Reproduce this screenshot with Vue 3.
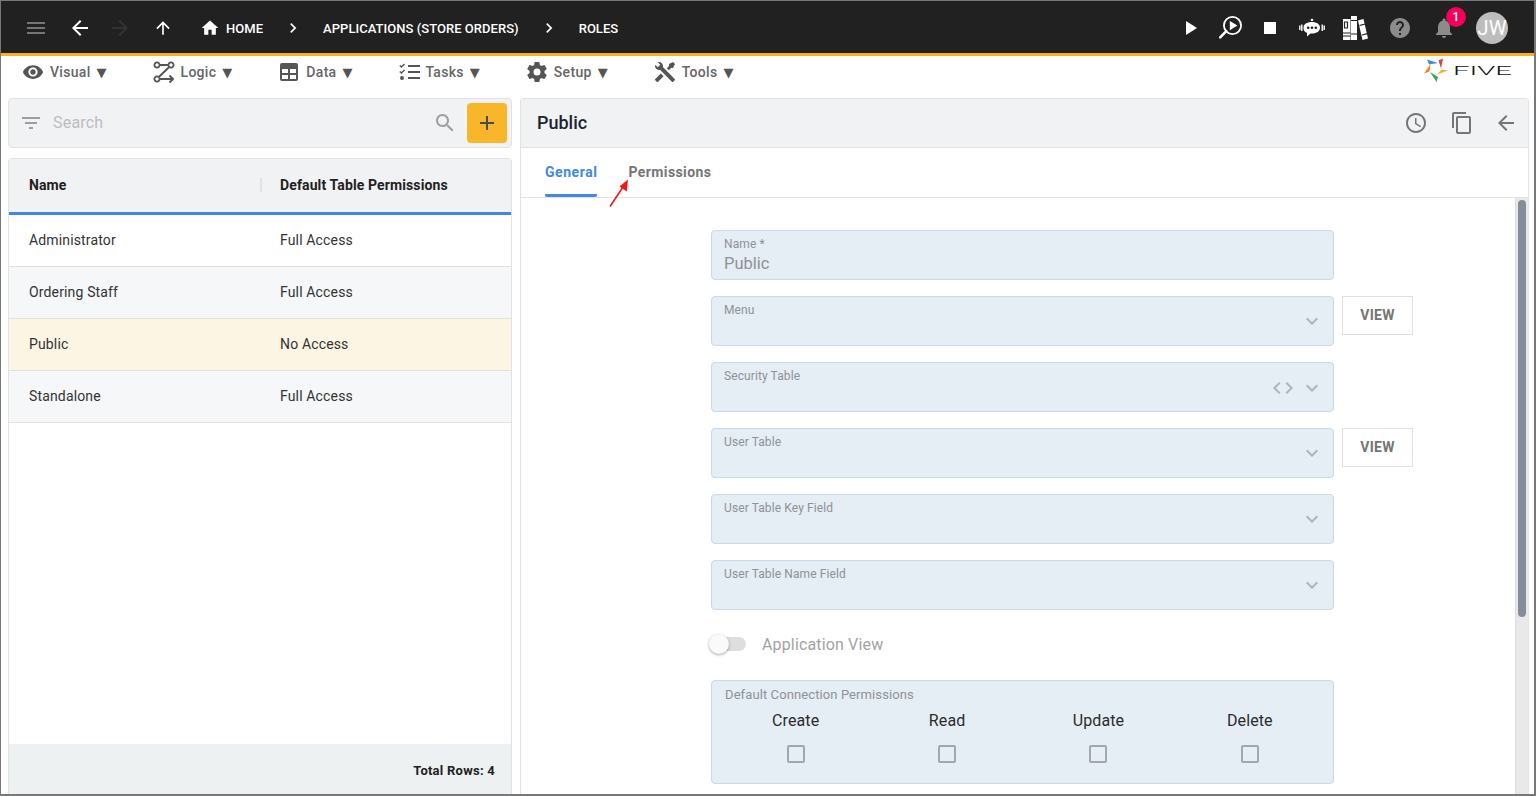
<script setup>
const icons = {
  menu: 'M3 18h18v-2H3v2zm0-5h18v-2H3v2zm0-7v2h18V6H3z',
  back: 'M20 11H7.83l5.59-5.59L12 4l-8 8 8 8 1.41-1.41L7.83 13H20v-2z',
  forward: 'M12 4l-1.41 1.41L16.17 11H4v2h12.17l-5.58 5.59L12 20l8-8z',
  up: 'M4 12l1.41 1.41L11 7.83V20h2V7.83l5.58 5.59L20 12l-8-8-8 8z',
  home: 'M10 20v-6h4v6h5v-8h3L12 3 2 12h3v8z',
  chevron: 'M10 6L8.59 7.41 13.17 12l-4.58 4.59L10 18l6-6z',
  play: 'M8 5v14l11-7z',
  stop: 'M6 6h12v12H6z',
  help: 'M12 2C6.48 2 2 6.48 2 12s4.48 10 10 10 10-4.48 10-10S17.52 2 12 2zm1 17h-2v-2h2v2zm2.07-7.75l-.9.92C13.45 12.9 13 13.5 13 15h-2v-.5c0-1.1.45-2.1 1.17-2.83l1.24-1.26c.37-.36.59-.86.59-1.41 0-1.1-.9-2-2-2s-2 .9-2 2H8c0-2.21 1.79-4 4-4s4 1.79 4 4c0 .88-.36 1.68-.93 2.25z',
  bell: 'M12 22c1.1 0 2-.9 2-2h-4c0 1.1.89 2 2 2zm6-6v-5c0-3.07-1.64-5.64-4.5-6.32V4c0-.83-.67-1.5-1.5-1.5s-1.5.67-1.5 1.5v.68C7.63 5.36 6 7.92 6 11v5l-2 2v1h16v-1l-2-2z',
  visual: 'M12 4.5C7 4.5 2.73 7.61 1 12c1.73 4.39 6 7.5 11 7.5s9.27-3.11 11-7.5c-1.73-4.39-6-7.5-11-7.5zM12 17c-2.76 0-5-2.24-5-5s2.24-5 5-5 5 2.24 5 5-2.24 5-5 5zm0-8c-1.66 0-3 1.34-3 3s1.34 3 3 3 3-1.34 3-3-1.34-3-3-3z',
  logic: 'M7.600 5h8.800M17.200 7 6.800 17M7.600 19H21M17.500 15.500 21 19l-3.500 3.500M2.400 5a2.600 2.600 0 1 0 5.200 0 2.600 2.600 0 1 0-5.200 0zM16.400 5a2.600 2.600 0 1 0 5.200 0 2.600 2.600 0 1 0-5.200 0zM2.400 19a2.600 2.600 0 1 0 5.200 0 2.600 2.600 0 1 0-5.200 0z',
  data: 'M5 3h14a2 2 0 0 1 2 2v14a2 2 0 0 1-2 2H5a2 2 0 0 1-2-2V5a2 2 0 0 1 2-2zm0 6v4h6V9H5zm8 0v4h6V9h-6zm-8 6v4h6v-4H5zm8 0v4h6v-4h-6z',
  tasks: 'M10 5h12v2H10V5zm0 6h12v2H10v-2zm0 6h12v2H10v-2zM3.400 8 1.300 5.900l1-1 1.100 1.100L6 3.400l1 1L3.400 8zm0 6-2.100-2.100 1-1 1.100 1.100L6 9.400l1 1L3.400 14zM4 16a2 2 0 1 1 0 4 2 2 0 0 1 0-4z',
  setup: 'M12 15.5A3.5 3.5 0 0 1 8.5 12 3.5 3.5 0 0 1 12 8.5a3.5 3.5 0 0 1 3.5 3.5 3.5 3.5 0 0 1-3.5 3.5m7.43-2.53c.04-.32.07-.64.07-.97 0-.33-.03-.66-.07-1l2.11-1.63c.19-.15.24-.42.12-.64l-2-3.46c-.12-.22-.39-.31-.61-.22l-2.49 1c-.52-.39-1.06-.73-1.69-.98l-.37-2.65A.506.506 0 0 0 14 2h-4c-.25 0-.46.18-.5.42l-.37 2.65c-.63.25-1.17.59-1.69.98l-2.49-1c-.22-.09-.49 0-.61.22l-2 3.46c-.13.22-.07.49.12.64L4.57 11c-.04.34-.07.67-.07 1 0 .33.03.65.07.97l-2.11 1.66c-.19.15-.25.42-.12.64l2 3.46c.12.22.39.3.61.22l2.49-1.01c.52.4 1.06.74 1.69.99l.37 2.65c.04.24.25.42.5.42h4c.25 0 .46-.18.5-.42l.37-2.65c.63-.26 1.17-.59 1.69-.99l2.49 1.01c.22.08.49 0 .61-.22l2-3.46c.12-.22.07-.49-.12-.64l-2.11-1.66z',
  tools: 'M21.71 20.29l-1.42 1.42a1 1 0 0 1-1.41 0L7 9.85A3.81 3.81 0 0 1 6 10a4 4 0 0 1-3.78-5.3l2.54 2.54.53-.53 1.42-1.42.53-.53L4.7 2.22A4 4 0 0 1 10 6a3.81 3.81 0 0 1-.15 1l11.86 11.88a1 1 0 0 1 0 1.41zM2.29 18.88a1 1 0 0 0 0 1.41l1.42 1.42a1 1 0 0 0 1.41 0l5.47-5.46-2.83-2.83zM20 2l-4 2v2l-2.17 2.17 2 2L18 8h2l2-4z',
  filter: 'M10 18h4v-2h-4v2zM3 6v2h18V6H3zm3 7h12v-2H6v2z',
  search: 'M15.5 14h-.79l-.28-.27C15.41 12.59 16 11.11 16 9.5 16 5.91 13.09 3 9.5 3S3 5.91 3 9.5 5.91 16 9.5 16c1.61 0 3.09-.59 4.23-1.57l.27.28v.79l5 4.99L20.49 19l-4.99-5zm-6 0C7.01 14 5 11.99 5 9.5S7.01 5 9.5 5 14 7.01 14 9.5 11.99 14 9.5 14z',
  add: 'M19 13h-6v6h-2v-6H5v-2h6V5h2v6h6v2z',
  clock: 'M11.99 2C6.47 2 2 6.48 2 12s4.47 10 9.99 10C17.52 22 22 17.52 22 12S17.52 2 11.99 2zM12 20c-4.42 0-8-3.58-8-8s3.58-8 8-8 8 3.58 8 8-3.58 8-8 8zm.5-13H11v6l5.25 3.15.75-1.23-4.5-2.67z',
  copy: 'M16 1H4c-1.1 0-2 .9-2 2v14h2V3h12V1zm3 4H8c-1.1 0-2 .9-2 2v14c0 1.1.9 2 2 2h11c1.1 0 2-.9 2-2V7c0-1.1-.9-2-2-2zm0 16H8V7h11v14z',
  expand: 'M16.59 8.59L12 13.17 7.41 8.59 6 10l6 6 6-6z',
  code: 'M9.4 16.6L4.8 12l4.6-4.6L8 6l-6 6 6 6 1.4-1.4zm5.2 0l4.6-4.6-4.6-4.6L16 6l6 6-6 6-1.4-1.4z',
}

const crumbs = ['APPLICATIONS (STORE ORDERS)', 'ROLES']
const menus = [
  { label: 'Visual', icon: 'visual' },
  { label: 'Logic', icon: 'logic' },
  { label: 'Data', icon: 'data' },
  { label: 'Tasks', icon: 'tasks' },
  { label: 'Setup', icon: 'setup' },
  { label: 'Tools', icon: 'tools' },
]
const rows = [
  { name: 'Administrator', access: 'Full Access' },
  { name: 'Ordering Staff', access: 'Full Access' },
  { name: 'Public', access: 'No Access', selected: true },
  { name: 'Standalone', access: 'Full Access' },
]
const fields = [
  { label: 'Menu', view: true },
  { label: 'Security Table', code: true },
  { label: 'User Table', view: true },
  { label: 'User Table Key Field' },
  { label: 'User Table Name Field' },
]
const permissions = ['Create', 'Read', 'Update', 'Delete']
</script>

<template>
  <div class="frame">
    <header class="topbar">
      <svg class="icon menu-icon" viewBox="0 0 24 24"><path :d="icons.menu" /></svg>
      <svg class="icon nav-back" viewBox="0 0 24 24"><path :d="icons.back" /></svg>
      <svg class="icon nav-forward" viewBox="0 0 24 24"><path :d="icons.forward" /></svg>
      <svg class="icon nav-up" viewBox="0 0 24 24"><path :d="icons.up" /></svg>
      <svg class="icon home-icon" viewBox="0 0 24 24"><path :d="icons.home" /></svg>
      <span class="crumb">HOME</span>
      <template v-for="crumb in crumbs" :key="crumb">
        <svg class="icon crumb-sep" viewBox="0 0 24 24"><path :d="icons.chevron" /></svg>
        <span class="crumb">{{ crumb }}</span>
      </template>

      <div class="top-actions">
        <button class="top-btn narrow"><svg class="icon" viewBox="0 0 24 24"><path :d="icons.play" /></svg></button>
        <button class="top-btn narrow">
          <svg class="icon large" viewBox="0 0 26 26">
            <circle cx="15.500" cy="10.500" r="8.600" fill="none" stroke="#fff" stroke-width="1.800" />
            <path d="M12.800 6l7.600 4.600-7.600 4.600z" />
            <path d="M9.300 16.200 3.200 22.400" fill="none" stroke="#fff" stroke-width="2.600" stroke-linecap="round" />
          </svg>
        </button>
        <button class="top-btn narrow"><svg class="icon" viewBox="0 0 24 24"><path :d="icons.stop" /></svg></button>
        <button class="top-btn">
          <svg class="icon large" viewBox="0 0 26 26">
            <path d="M13 6c-1 0-1.300-.5-1.300-1a1.300 1.300 0 0 1 2.600 0c0 .5-.3 1-1.300 1zM13 7c4.800 0 8 2.300 8 5.700s-3.200 5.800-8 5.800h-1.500l-3.500 3v-3.500c-2.500-1-3.500-3-3.500-5.300 0-3.400 3.200-5.700 8.500-5.700z" />
            <circle cx="9.200" cy="12.800" r="1.300" fill="#212121" />
            <circle cx="13" cy="12.800" r="1.300" fill="#212121" />
            <circle cx="16.800" cy="12.800" r="1.300" fill="#212121" />
            <path d="M2.800 9.500v6.500M.8 10.500v4.500M23.200 9.500v6.500M25.200 10.500v4.500" fill="none" stroke="#fff" stroke-width="1.400" />
          </svg>
        </button>
        <button class="top-btn">
          <svg class="icon large" viewBox="0 0 26 26">
            <path d="M0 4h7.500v21H0zM8 1h6v24H8zM15 5.500l5.500-1.500 4.500 19.500-5.500 1.500z" />
            <path d="M1.500 7h3v6h-3zM0 18h7.500M0 21h7.500M8 5.500h6M8 19h6M16.500 10.500l5.300-1.300M19 20l5.300-1.300" fill="none" stroke="#212121" stroke-width="1.200" />
          </svg>
        </button>
        <button class="top-btn"><svg class="icon grey" viewBox="0 0 24 24"><path :d="icons.help" /></svg></button>
        <button class="top-btn bell">
          <svg class="icon grey" viewBox="0 0 24 24"><path :d="icons.bell" /></svg>
          <span class="badge">1</span>
        </button>
        <div class="avatar">JW</div>
      </div>
    </header>

    <nav class="toolbar">
      <div v-for="item in menus" :key="item.label" class="tool">
        <svg class="icon" :class="item.icon" viewBox="0 0 24 24"><path :d="icons[item.icon]" fill-rule="evenodd" /></svg>
        <span>{{ item.label }}</span>
        <span class="caret">▼</span>
      </div>
      <div class="logo">
        <svg class="logo-mark" viewBox="0 0 24 24">
          <path d="M3 1.500 14 5 5 6.500z" fill="#3f8bdf" />
          <path d="M14.500 2.500 19 .5 17 10.500z" fill="#e53b3b" />
          <path d="M24 12.500 13 16.500l4.500-5z" fill="#f5b324" />
          <path d="M6 14l8 5-1.500 5z" fill="#39a857" />
          <path d="M0 15.500 6.500 6l-1 7.500z" fill="#f58220" />
        </svg>
        <span class="logo-text">FIVE</span>
      </div>
    </nav>

    <main class="workspace">
      <section class="left">
        <div class="search-bar">
          <svg class="icon filter" viewBox="0 0 24 24"><path :d="icons.filter" /></svg>
          <span class="search-text">Search</span>
          <svg class="icon search" viewBox="0 0 24 24"><path :d="icons.search" /></svg>
          <button class="add-btn"><svg class="icon" viewBox="0 0 24 24"><path :d="icons.add" /></svg></button>
        </div>

        <div class="table">
          <div class="table-head">
            <div class="cell">Name</div>
            <div class="cell">Default Table Permissions</div>
          </div>
          <div class="table-body">
            <div v-for="row in rows" :key="row.name" class="row" :class="{ selected: row.selected }">
              <div class="cell">{{ row.name }}</div>
              <div class="cell">{{ row.access }}</div>
            </div>
          </div>
          <div class="table-foot">Total Rows: 4</div>
        </div>
      </section>

      <section class="right">
        <div class="form-head">
          <h1>Public</h1>
          <svg class="icon" viewBox="0 0 24 24"><path :d="icons.clock" /></svg>
          <svg class="icon copy" viewBox="0 0 24 24"><path :d="icons.copy" /></svg>
          <svg class="icon" viewBox="0 0 24 24"><path :d="icons.back" /></svg>
        </div>
        <div class="tabs">
          <div class="tab active">General</div>
          <div class="tab">Permissions</div>
          <svg class="arrow" viewBox="0 0 22 30">
            <path d="M2 28.500 15 9" fill="none" stroke="#f01818" stroke-width="1.600" />
            <path d="M20 1.500 18.800 13.500 11.500 8.500z" fill="#f01818" />
          </svg>
        </div>
        <div class="form-scroll">
          <div class="form">
            <div class="field-row">
              <div class="field">
                <label>Name *</label>
                <div class="value">Public</div>
              </div>
            </div>
            <div v-for="field in fields" :key="field.label" class="field-row">
              <div class="field">
                <label>{{ field.label }}</label>
                <div class="field-icons" :class="{ 'with-code': field.code }">
                  <svg v-if="field.code" class="icon" viewBox="0 0 24 24"><path :d="icons.code" /></svg>
                  <svg class="icon" viewBox="0 0 24 24"><path :d="icons.expand" /></svg>
                </div>
              </div>
              <button v-if="field.view" class="view-btn">VIEW</button>
            </div>
            <div class="toggle-row">
              <span class="toggle"><span class="knob" /></span>
              <span class="toggle-label">Application View</span>
            </div>
            <div class="perm-box">
              <div class="perm-title">Default Connection Permissions</div>
              <div class="perm-grid">
                <div v-for="perm in permissions" :key="perm" class="perm">
                  <span>{{ perm }}</span>
                  <span class="check" />
                </div>
              </div>
            </div>
          </div>
          <div class="scroll-track"><div class="scroll-thumb" /></div>
        </div>
      </section>
    </main>
  </div>
</template>

<style>
html, body {
  margin: 0;
  overflow: hidden;
}
</style>

<style scoped>
* {
  box-sizing: border-box;
}

.frame {
  width: 1536px;
  height: 796px;
  display: flex;
  flex-direction: column;
  overflow: hidden;
  background: #fff;
  border: solid #787878;
  border-width: 1px 2px 2px 1px;
  font-family: Roboto, "Liberation Sans", sans-serif;
  color: #212121;
}

.icon {
  width: 24px;
  height: 24px;
  flex: none;
  fill: currentColor;
  display: block;
}

button {
  border: 0;
  background: none;
  padding: 0;
  font: inherit;
  display: flex;
  align-items: center;
  justify-content: center;
}

.topbar {
  height: 55px;
  flex: none;
  display: flex;
  align-items: center;
  background: #212121;
  border-bottom: 3px solid #f5b324;
  color: #fff;
  padding: 2px 0 0 23px;
}

.menu-icon {
  color: #757575;
}

.nav-back {
  margin-left: 20px;
}

.nav-forward {
  margin-left: 16px;
  color: #333;
}

.nav-up {
  margin-left: 21px;
  width: 20px;
  height: 20px;
}

.home-icon {
  margin: 0 6px 0 27px;
  width: 20px;
  height: 20px;
}

.crumb {
  font-size: 13px;
  font-weight: 500;
  letter-spacing: 0.04px;
  white-space: nowrap;
}

.crumb-sep {
  margin: 0 20px;
  width: 20px;
  height: 20px;
}

.top-actions {
  margin-left: auto;
  display: flex;
  align-items: center;
  padding-right: 26px;
}

.top-btn {
  width: 44px;
  height: 40px;
  color: #fff;
  position: relative;
}

.top-btn.narrow {
  width: 40px;
}

.icon.large {
  width: 26px;
  height: 26px;
}

.icon.grey {
  color: #8c8c8c;
}

.top-btn.bell {
  margin-right: 10px;
}

.badge {
  position: absolute;
  top: -1px;
  left: 24px;
  width: 20px;
  height: 20px;
  border-radius: 50%;
  background: #f50057;
  color: #fff;
  font-size: 12px;
  font-weight: 500;
  line-height: 20px;
  text-align: center;
}

.avatar {
  width: 32px;
  height: 32px;
  border-radius: 50%;
  background: #bdbdbd;
  color: #fff;
  font-size: 20px;
  line-height: 32px;
  text-align: center;
}

.toolbar {
  height: 42px;
  flex: none;
  display: flex;
  align-items: flex-start;
  gap: 46px;
  padding: 4px 0 0 21px;
}

.tool {
  display: flex;
  align-items: center;
  gap: 6px;
  height: 24px;
  font-size: 14px;
  font-weight: 500;
  letter-spacing: 0.3px;
  color: #666;
}

.tool .icon {
  width: 24px;
  height: 24px;
  margin: 0 -1px;
  color: #555;
}

.tool .icon.visual {
  width: 22px;
  height: 22px;
  margin: 0;
}

.tool .icon.logic {
  fill: none;
  stroke: #555;
  stroke-width: 1.900;
}

.tool .icon.tasks {
  margin: 0 -3px 0 0;
}

.caret {
  font-family: "DejaVu Sans", sans-serif;
  font-size: 13px;
  letter-spacing: 0;
  color: #555;
}

.logo {
  margin-left: auto;
  margin-right: 22px;
  margin-top: -2px;
  display: flex;
  align-items: center;
  gap: 5px;
  height: 24px;
}

.logo-mark {
  width: 24px;
  height: 24px;
}

.logo-text {
  font-family: Roboto, sans-serif;
  font-weight: 300;
  font-size: 13px;
  width: 59px;
  transform: scaleX(2.25);
  transform-origin: left center;
  color: #111;
}

.workspace {
  flex: 1;
  min-height: 0;
  display: flex;
  gap: 8px;
  padding: 0 5px 0 7px;
}

.left {
  width: 504px;
  flex: none;
  display: flex;
  flex-direction: column;
  gap: 10px;
}

.search-bar {
  height: 50px;
  flex: none;
  display: flex;
  align-items: center;
  padding: 0 4px 0 10px;
  background: #f1f2f4;
  border: 1px solid #e2e2e2;
  border-radius: 4px;
}

.filter {
  color: #9e9e9e;
}

.search-text {
  margin-left: 10px;
  padding-bottom: 2px;
  flex: 1;
  font-size: 16px;
  letter-spacing: 0.2px;
  color: #bdbdbd;
}

.search {
  color: #9e9e9e;
  margin-right: 10px;
}

.add-btn {
  width: 40px;
  height: 40px;
  border-radius: 4px;
  background: #f8b72a;
  color: #4a4a4a;
}

.table {
  flex: 1;
  min-height: 0;
  display: flex;
  flex-direction: column;
  border: 1px solid #e2e2e2;
  border-bottom: 0;
  border-radius: 4px 4px 0 0;
}

.table-head {
  height: 56px;
  flex: none;
  display: flex;
  align-items: center;
  padding-bottom: 2px;
  background: #f1f2f4;
  border-bottom: 3px solid #4188df;
  font-size: 14px;
  font-weight: 700;
  letter-spacing: 0.12px;
}

.cell {
  width: 251px;
  padding-left: 20px;
}

.table-head .cell + .cell {
  border-left: 2px solid #e2e2e2;
  padding-left: 18px;
  line-height: 14px;
}

.table-body {
  flex: 1;
}

.row {
  height: 52px;
  display: flex;
  align-items: center;
  padding-bottom: 2px;
  border-bottom: 1px solid #e0e0e0;
  font-size: 14px;
  letter-spacing: 0.15px;
  color: #333;
}

.row:nth-child(even) {
  background: #f5f7f8;
}

.row.selected {
  background: #fdf5e3;
}

.table-foot {
  height: 50px;
  flex: none;
  display: flex;
  align-items: center;
  justify-content: flex-end;
  padding: 2px 16px 0 0;
  background: #eef1f1;
  font-size: 13px;
  font-weight: 700;
  letter-spacing: 0.25px;
}

.right {
  flex: 1;
  min-width: 0;
  display: flex;
  flex-direction: column;
  border: 1px solid #e2e2e2;
  border-bottom: 0;
  border-radius: 4px 4px 0 0;
}

.form-head {
  height: 49px;
  flex: none;
  display: flex;
  align-items: center;
  gap: 22px;
  padding: 0 10px 1px 16px;
  background: #f1f2f4;
  border-bottom: 1px solid #e2e2e2;
  color: #757575;
}

.form-head h1 {
  margin: 0 auto 0 0;
  font-size: 18px;
  font-weight: 500;
  color: #1c2331;
}

.form-head .copy {
  margin-right: -2px;
}

.tabs {
  height: 50px;
  flex: none;
  display: flex;
  gap: 31px;
  padding-left: 24px;
  border-bottom: 1px solid #e2e2e2;
  position: relative;
}

.tab {
  height: 49px;
  line-height: 48px;
  font-size: 14px;
  font-weight: 700;
  letter-spacing: 0.4px;
  color: #757575;
}

.tab.active {
  letter-spacing: 0.55px;
  color: #4188df;
  border-bottom: 3px solid #4188df;
  border-radius: 2px;
}

.arrow {
  position: absolute;
  left: 87px;
  top: 30px;
  width: 22px;
  height: 30px;
}

.form-scroll {
  flex: 1;
  min-height: 0;
  display: flex;
  overflow: hidden;
}

.form {
  flex: 1;
  display: flex;
  flex-direction: column;
  gap: 16px;
  padding: 32px 0 0 190px;
}

.field-row {
  display: flex;
  align-items: flex-start;
  gap: 8px;
}

.field {
  width: 623px;
  height: 50px;
  flex: none;
  padding: 6px 12px;
  background: #e5edf5;
  border: 1px solid #c8d9ea;
  border-radius: 4px;
  position: relative;
}

.field label {
  display: block;
  font-size: 12px;
  line-height: 14px;
  letter-spacing: 0.1px;
  color: #8f9297;
}

.value {
  margin-top: 2px;
  font-size: 16.500px;
  line-height: 22px;
  color: #8f9297;
}

.field-icons {
  position: absolute;
  right: 9px;
  top: 12px;
  display: flex;
  align-items: center;
  gap: 5px;
  color: #b0b3b8;
}

.field-icons.with-code {
  top: 13px;
}

.view-btn {
  width: 71px;
  height: 39px;
  padding-bottom: 2px;
  background: #fff;
  border: 1px solid #e0e0e0;
  font-size: 14px;
  font-weight: 700;
  letter-spacing: 0.3px;
  color: #757575;
}

.toggle-row {
  height: 22px;
  display: flex;
  align-items: center;
  margin-top: 7px;
  margin-bottom: 9px;
}

.toggle {
  width: 30px;
  height: 14px;
  margin-left: 5px;
  border-radius: 7px;
  background: #dedede;
  position: relative;
}

.knob {
  position: absolute;
  left: -7px;
  top: -3px;
  width: 20px;
  height: 20px;
  border-radius: 50%;
  background: #fafafa;
  box-shadow: 0 1px 3px rgba(0, 0, 0, 0.35);
}

.toggle-label {
  margin-left: 16px;
  font-size: 16px;
  letter-spacing: 0.15px;
  color: #a3a3a3;
}

.perm-box {
  width: 623px;
  height: 104px;
  flex: none;
  padding: 6px 13px;
  background: #e5edf5;
  border: 1px solid #c8d9ea;
  border-radius: 4px;
}

.perm-title {
  font-size: 13px;
  line-height: 16px;
  letter-spacing: 0.1px;
  color: #8f9297;
}

.perm-grid {
  margin-top: 8px;
  display: grid;
  grid-template-columns: repeat(4, 151.400px);
  margin-left: -5px;
}

.perm {
  display: flex;
  flex-direction: column;
  align-items: center;
  gap: 15px;
  font-size: 16px;
  line-height: 19px;
  letter-spacing: 0.1px;
  color: #2b2b2b;
}

.check {
  width: 18px;
  height: 18px;
  border: 2px solid #a3a7ad;
  border-radius: 2px;
}

.scroll-track {
  width: 13px;
  flex: none;
  padding: 2px 2px 0 2px;
  background: #e9e9e9;
  border-left: 1px solid #dcdcdc;
}

.scroll-thumb {
  height: 417px;
  border-radius: 4px;
  background: #868c9a;
}
</style>
